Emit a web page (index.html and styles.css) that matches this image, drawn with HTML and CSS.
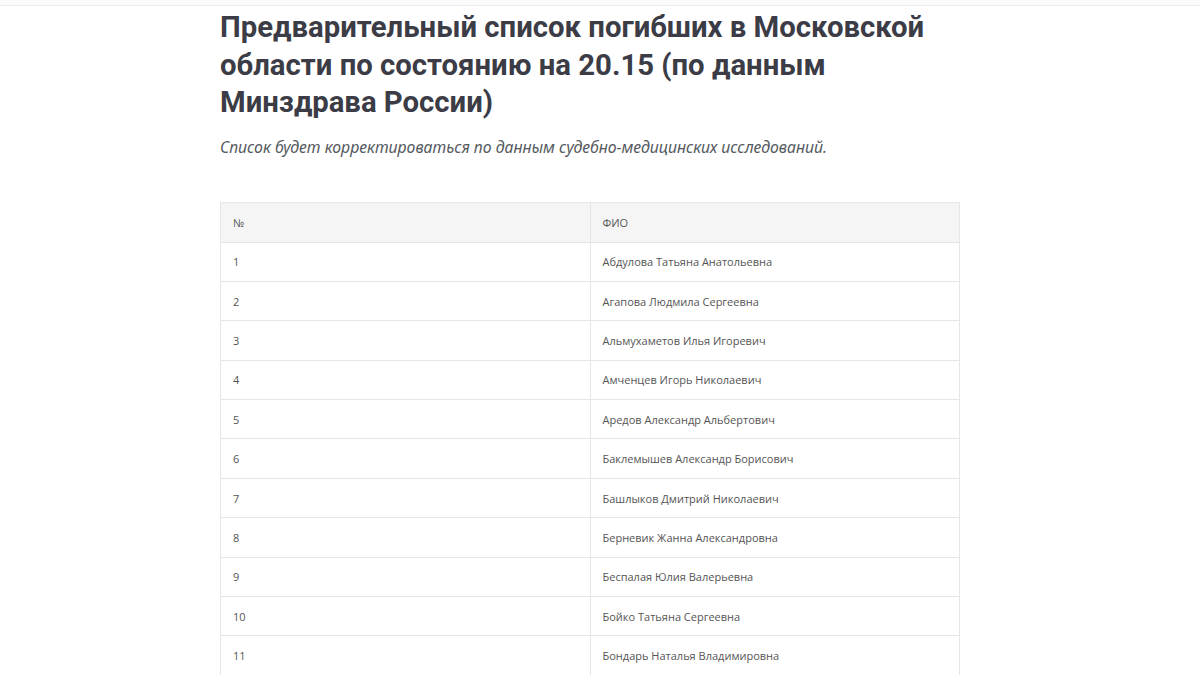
FILE: index.html
```html
<!DOCTYPE html>
<html lang="ru">
<head>
<meta charset="utf-8">
<link rel="stylesheet" href="styles.css">
</head>
<body>
<div class="topbar"></div>
<main class="article">
  <h1 class="title">Предварительный список погибших в Московской области по состоянию на 20.15 (по данным Минздрава России)</h1>
  <p class="lead">Список будет корректироваться по данным судебно-медицинских исследований.</p>
  <table class="list">
    <thead>
      <tr><th>№</th><th>ФИО</th></tr>
    </thead>
    <tbody>
      <tr><td>1</td><td>Абдулова Татьяна Анатольевна</td></tr>
      <tr><td>2</td><td>Агапова Людмила Сергеевна</td></tr>
      <tr><td>3</td><td>Альмухаметов Илья Игоревич</td></tr>
      <tr><td>4</td><td>Амченцев Игорь Николаевич</td></tr>
      <tr><td>5</td><td>Аредов Александр Альбертович</td></tr>
      <tr><td>6</td><td>Баклемышев Александр Борисович</td></tr>
      <tr><td>7</td><td>Башлыков Дмитрий Николаевич</td></tr>
      <tr><td>8</td><td>Берневик Жанна Александровна</td></tr>
      <tr><td>9</td><td>Беспалая Юлия Валерьевна</td></tr>
      <tr><td>10</td><td>Бойко Татьяна Сергеевна</td></tr>
      <tr><td>11</td><td>Бондарь Наталья Владимировна</td></tr>
    </tbody>
  </table>
</main>
</body>
</html>
```
FILE: styles.css
```css
html, body {
  margin: 0;
  padding: 0;
  background: #ffffff;
}
.topbar {
  height: 5px;
  background: #fbfbfb;
  border-bottom: 1px solid #ececec;
}
.article {
  width: 740px;
  margin: 0 0 0 220px;
}
.title {
  margin: 3px 0 0 0;
  font-family: Roboto, sans-serif;
  font-weight: 700;
  font-size: 29.3px;
  line-height: 37.5px;
  color: #3b3c46;
  letter-spacing: 0;
}
.lead {
  margin: 14px 0 0 0;
  font-family: "Noto Sans", sans-serif;
  font-style: italic;
  font-size: 15.8px;
  line-height: 22px;
  color: #555a60;
}
.list {
  margin-top: 44px;
  width: 740px;
  border-collapse: collapse;
  font-family: "Open Sans", sans-serif;
  font-size: 11px;
  color: #555;
}
.list th, .list td {
  border: 1px solid #e6e6e6;
  height: 39.4px;
  padding: 0 0 0 12px;
  text-align: left;
  font-weight: 400;
  width: 50%;
  box-sizing: border-box;
}
.list th {
  background: #f5f5f6;
  height: 40px;
}
```
